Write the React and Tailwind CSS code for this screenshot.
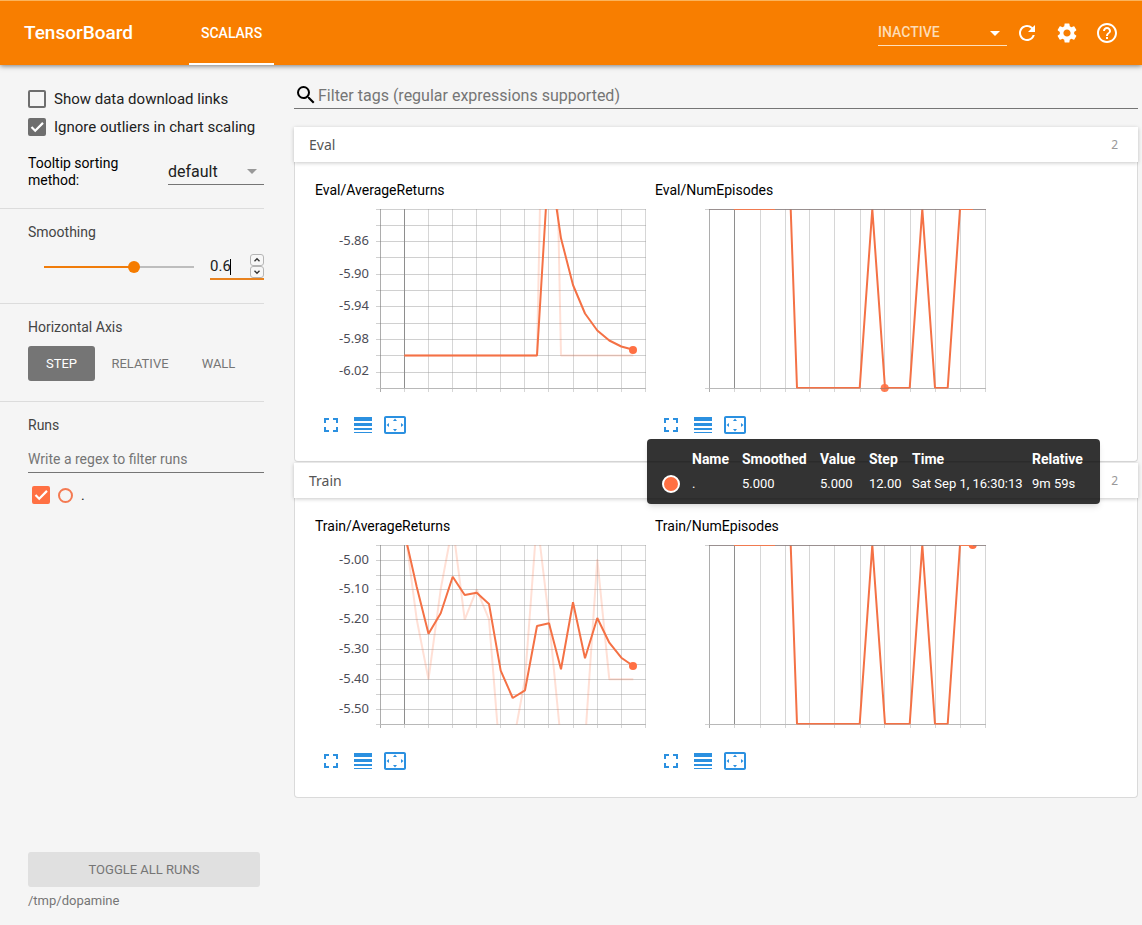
import {
  MdArrowDropDown,
  MdFullscreen,
  MdHelpOutline,
  MdLineWeight,
  MdRefresh,
  MdSearch,
  MdSettings,
  MdSettingsOverscan,
} from 'react-icons/md';

const RETURN_X = [65, 89, 113, 137, 161, 185, 209, 233, 258, 282, 306, 330];
const EPISODE_X = [54, 79, 105, 130, 154, 179, 205, 229, 255, 280, 305, 330];

const EPISODE_LINE =
  'M135.7 6L142 185H204.7L217.3 6L230 185H254.7L267.3 6L280 185H292.7L305 6H317.7';

const SECTIONS = [
  {
    name: 'Eval',
    charts: [
      {
        id: 'eval-returns',
        title: 'Eval/AverageReturns',
        xs: RETURN_X,
        ys: [6, 22, 38, 54, 71, 87, 103, 120, 136, 152, 169, 185],
        labels: [
          [38, '-5.86'],
          [71, '-5.90'],
          [103, '-5.94'],
          [136, '-5.98'],
          [168, '-6.02'],
        ],
        line: 'M89.3 152.5H222L234 -46L246 35.3L258 82L270 110.5L282.3 127.5L294.3 137.5L306.3 143.5L318.3 146.8',
        raw: 'M89.3 152.5H222L234 -448L246 152.5H318.3',
        dot: [318, 147],
      },
      {
        id: 'eval-episodes',
        title: 'Eval/NumEpisodes',
        xs: EPISODE_X,
        ys: [6, 185],
        labels: [],
        line: EPISODE_LINE,
        dot: [229.7, 185],
        hovered: true,
      },
    ],
  },
  {
    name: 'Train',
    charts: [
      {
        id: 'train-returns',
        title: 'Train/AverageReturns',
        xs: RETURN_X,
        ys: [6, 21, 36, 50, 66, 80, 95, 110, 125, 140, 155, 170, 185],
        labels: [
          [21, '-5.00'],
          [50, '-5.10'],
          [80, '-5.20'],
          [110, '-5.30'],
          [140, '-5.40'],
          [170, '-5.50'],
        ],
        line: 'M89.3 -7L101.7 47.7L113.5 94.7L125.7 74.3L137.7 37.7L149.7 56L161.7 53.7L174 65L185.7 131.7L197.7 159L210 151.3L222 87L234 84.3L246 130.3L258 63.3L270 119.3L282.3 79L294.3 103.7L306.3 118.7L318.3 127',
        raw: 'M89.3 -14L101.7 80.3L113.5 140.3L125.7 50.3L137.7 -14L149.7 80.7L161.7 50.3L174 80.3L185.7 227L197.7 207L210 140.3L222 -20L234 80.3L246 203M270 203L282.3 20.3L294.3 140.3H318.3',
        dot: [318, 127],
      },
      {
        id: 'train-episodes',
        title: 'Train/NumEpisodes',
        xs: EPISODE_X,
        ys: [6, 185],
        labels: [],
        line: EPISODE_LINE,
        dot: [317.7, 6],
        clipDot: true,
      },
    ],
  },
];

function Chart({ chart }) {
  const { id, title, xs, ys, labels, line, raw, dot, clipDot, hovered } = chart;
  const left = xs[0];
  const framed = labels.length === 0;
  const marker = (
    <circle cx={dot[0]} cy={dot[1]} r="4" fill="#ff7043" opacity={hovered ? 0.9 : 1} />
  );
  return (
    <svg
      className="block overflow-visible"
      width="330"
      height="196"
      viewBox="0 0 330 196"
      role="img"
      aria-label={title}
    >
      <defs>
        <clipPath id={id}>
          <rect x={left} y="6" width={331 - left} height="179.5" />
        </clipPath>
      </defs>
      <g shapeRendering="crispEdges">
        {ys.map((y) => (
          <path key={y} d={`M${left - 4} ${y + 0.5}H331`} stroke="#d0d0d0" />
        ))}
        {xs.map((x, i) => (
          <path
            key={x}
            d={`M${x + 0.5} 6V189`}
            stroke={i === 0 ? '#777777' : '#999999'}
            strokeOpacity={i === 0 ? 0.6 : 0.4}
          />
        ))}
        <path d={`M${xs[1] + 0.5} 6V186`} stroke="#8e8e8e" />
        <path d={`M${left} 185.5H331`} stroke="#b8b8b8" />
      </g>
      <g clipPath={`url(#${id})`} fill="none" strokeWidth="2" strokeLinejoin="bevel">
        {raw && <path d={raw} stroke="#ff7043" strokeOpacity="0.22" />}
        <path d={line} stroke="#f47145" />
        {clipDot && marker}
      </g>
      {framed && (
        <g>
          <rect x={left} y="6" width={331 - left} height="1" fill="#8c8080" fillOpacity="0.8" />
          <rect x="79" y="6" width="41" height="1" fill="#f07a50" />
          <rect x="305" y="6" width="13" height="1" fill="#f07a50" />
        </g>
      )}
      {!clipDot && marker}
      {hovered && <path d="M225 185.5H234" stroke="#9a7468" strokeOpacity="0.6" />}
      <g fill="#4c4c56" textAnchor="end" className="font-['Noto_Sans',sans-serif] text-[13px]">
        {labels.map(([y, text]) => (
          <text key={text} x="54" y={y + 4}>
            {text}
          </text>
        ))}
      </g>
    </svg>
  );
}

function ChartTooltip() {
  return (
    <div className="absolute top-[259px] -left-2 z-10 w-max rounded bg-black/80 px-[15px] py-2 text-white shadow-md">
      <table className="w-max text-left whitespace-nowrap">
        <thead>
          <tr className="h-6 text-sm">
            <td className="min-w-[30px]" />
            <th className="min-w-[50px]">Name</th>
            <th className="min-w-[78px]">Smoothed</th>
            <th className="min-w-[49px]">Value</th>
            <th className="min-w-[43px]">Step</th>
            <th className="min-w-[120px]">Time</th>
            <th className="min-w-[53px]">Relative</th>
          </tr>
        </thead>
        <tbody>
          <tr className="h-[25px] text-[13px]">
            <td>
              <span className="block size-[18px] rounded-full border-2 border-white bg-[#ff7043]" />
            </td>
            <td>.</td>
            <td>5.000</td>
            <td>5.000</td>
            <td>12.00</td>
            <td>Sat Sep 1, 16:30:13</td>
            <td>9m 59s</td>
          </tr>
        </tbody>
      </table>
    </div>
  );
}

function ChartCard({ chart }) {
  return (
    <article className="relative w-[330px]">
      <h3 className="mb-[3px] text-sm leading-5 text-black">{chart.title}</h3>
      <Chart chart={chart} />
      <div className="mt-3.5 flex gap-2 pl-1 text-[#2b90e0]">
        <button type="button" aria-label="Toggle full size">
          <MdFullscreen size={24} />
        </button>
        <button type="button" aria-label="Toggle log scale">
          <MdLineWeight size={24} />
        </button>
        <button type="button" aria-label="Fit domain to data">
          <MdSettingsOverscan size={24} />
        </button>
      </div>
      {chart.hovered && <ChartTooltip />}
    </article>
  );
}

function Section({ section }) {
  return (
    <section>
      <button
        type="button"
        className="relative flex h-[35px] w-full items-center justify-between bg-white px-[15px] font-['Noto_Sans',sans-serif] text-sm text-[#555] shadow-[0_1px_4px_rgba(0,0,0,0.22)]"
      >
        <span>{section.name}</span>
        <span className="mr-[5px] text-xs text-[#999]">{section.charts.length}</span>
      </button>
      <div className="flex min-h-[300px] flex-wrap gap-x-2.5 rounded-b-sm border border-t-0 border-[#dadada] bg-white py-[18px] pl-5">
        {section.charts.map((chart) => (
          <ChartCard key={chart.id} chart={chart} />
        ))}
      </div>
    </section>
  );
}

function CheckMark() {
  return (
    <svg
      viewBox="0 0 18 18"
      className="pointer-events-none absolute inset-0 hidden text-white peer-checked:block"
      fill="none"
      stroke="currentColor"
      strokeWidth="2.2"
    >
      <path d="M3.5 9L7.2 12.7L15 4.9" />
    </svg>
  );
}

function Checkbox({ label, checked }) {
  return (
    <label className="flex h-7 items-center gap-2 text-[15px] whitespace-nowrap text-[#212121]">
      <span className="relative size-[18px]">
        <input
          type="checkbox"
          defaultChecked={checked}
          className="peer block size-[18px] appearance-none rounded-xs border-2 border-[#6e6e6e] checked:bg-[#6e6e6e]"
        />
        <CheckMark />
      </span>
      <span className="pt-0.5">{label}</span>
    </label>
  );
}

function Spinner() {
  return (
    <span className="flex flex-col text-[#333]">
      {['M3.5 7.5L6.5 4.5L9.5 7.5', 'M3.5 4.5L6.5 7.5L9.5 4.5'].map((d, i) => (
        <button
          key={d}
          type="button"
          aria-label={i === 0 ? 'Increase' : 'Decrease'}
          className="h-3 w-3.5 rounded-[3px] border border-[#b5b5b5] bg-[#f7f7f7]"
        >
          <svg
            viewBox="0 0 13 12"
            className="block h-2.5 w-3"
            fill="none"
            stroke="currentColor"
            strokeWidth="1.6"
          >
            <path d={d} />
          </svg>
        </button>
      ))}
    </span>
  );
}

function Sidebar() {
  return (
    <aside className="flex w-[264px] shrink-0 flex-col pt-5 pb-3.5 text-sm text-[#444]">
      <div className="border-b border-[#dcdcdc] pb-[23px] pl-7">
        <Checkbox label="Show data download links" />
        <Checkbox label="Ignore outliers in chart scaling" checked />
        <div className="mt-3 flex h-8 justify-between">
          <label htmlFor="sorting" className="w-28 pt-0.5 leading-[17px] text-black">
            Tooltip sorting method:
          </label>
          <span className="relative flex h-8 w-24 border-b border-[#757575]">
            <select
              id="sorting"
              className="w-full appearance-none pt-1.5 text-base text-[#212121] outline-none"
            >
              <option>default</option>
            </select>
            <MdArrowDropDown
              size={24}
              className="pointer-events-none absolute top-1.5 right-0 text-[#999]"
            />
          </span>
        </div>
      </div>

      <div className="border-b border-[#dcdcdc] pt-[13px] pb-[23px] pl-7">
        <label htmlFor="smoothing" className="block leading-5">
          Smoothing
        </label>
        <div className="mt-[11px] flex items-center justify-between pl-2.5">
          <input
            id="smoothing"
            type="range"
            min="0"
            max="1"
            step="0.1"
            defaultValue="0.6"
            className="h-3 w-[162px] appearance-none bg-[linear-gradient(to_right,#f07c0a_60%,#bdbdbd_60%)] bg-[length:150px_2px] bg-center bg-no-repeat [&::-webkit-slider-thumb]:size-3 [&::-webkit-slider-thumb]:appearance-none [&::-webkit-slider-thumb]:rounded-full [&::-webkit-slider-thumb]:bg-[#f57c00]"
          />
          <span className="relative flex w-[54px] items-center justify-between border-b-2 border-[#e8821e] pt-px">
            <input
              type="text"
              inputMode="decimal"
              aria-label="Smoothing value"
              defaultValue="0.6"
              className="w-9 text-[15px] leading-6 text-[#212121] outline-none"
            />
            <span className="absolute top-1.5 left-5 h-4 w-px bg-black" />
            <Spinner />
          </span>
        </div>
      </div>

      <div className="border-b border-[#dcdcdc] pt-[13px] pb-5 pl-7">
        <h2 className="leading-5">Horizontal Axis</h2>
        <div className="mt-[9px] flex gap-[3px] text-[13px] text-[#757575]">
          <button
            type="button"
            className="h-[35px] w-[67px] rounded-[3px] bg-[#757575] pt-0.5 text-white"
          >
            STEP
          </button>
          <button type="button" className="h-[35px] w-[84px] pt-0.5">
            RELATIVE
          </button>
          <button type="button" className="h-[35px] w-[67px] pt-0.5">
            WALL
          </button>
        </div>
      </div>

      <div className="pt-[13px] pl-7">
        <h2 className="leading-5">Runs</h2>
        <input
          type="text"
          aria-label="Filter runs"
          placeholder="Write a regex to filter runs"
          className="mt-2.5 block h-7 w-full border-b border-[#757575] outline-none placeholder:text-[#757575]"
        />
        <label className="mt-[13px] flex items-center gap-2 pl-1 text-[#212121]">
          <span className="relative size-[18px]">
            <input
              type="checkbox"
              defaultChecked
              className="peer block size-[18px] appearance-none rounded-xs border-2 border-[#ff7043] checked:bg-[#ff7043]"
            />
            <CheckMark />
          </span>
          <span className="size-[15px] rounded-full border-2 border-[#f47a52]" />
          <span className="leading-[18px]">.</span>
        </label>
      </div>

      <div className="mt-auto pr-1 pl-7 text-[13px] text-[#757575]">
        <button type="button" className="block h-[35px] w-full rounded-[3px] bg-[#e0e0e0] pt-0.5">
          TOGGLE ALL RUNS
        </button>
        <p className="mt-1 leading-5">/tmp/dopamine</p>
      </div>
    </aside>
  );
}

function Header() {
  return (
    <header className="relative z-20 flex h-[65px] items-center border-t border-[#fbb45c] bg-[#f87e00] pr-[23px] pl-6 text-white shadow-[0_1px_5px_rgba(0,0,0,0.5)]">
      <h1 className="w-[165px] text-[19px] font-medium">TensorBoard</h1>
      <nav className="h-full">
        <a
          href="#scalars"
          className="flex h-full items-center border-y-2 border-t-transparent border-b-white px-3 text-sm font-medium"
        >
          SCALARS
        </a>
      </nav>
      <div className="ml-auto flex items-center gap-4">
        <span className="relative -mr-2 mb-0.5 flex h-[27px] w-[129px] border-b border-[#fde0bd]">
          <select
            aria-label="Inactive dashboards"
            className="w-full appearance-none text-sm font-medium text-[#fddcb5] outline-none"
          >
            <option>INACTIVE</option>
          </select>
          <MdArrowDropDown size={24} className="pointer-events-none absolute top-0.5 right-0" />
        </span>
        <button type="button" aria-label="Reload">
          <MdRefresh size={24} />
        </button>
        <button type="button" aria-label="Settings">
          <MdSettings size={24} />
        </button>
        <a href="#help" aria-label="Help">
          <MdHelpOutline size={24} />
        </a>
      </div>
    </header>
  );
}

export default function App() {
  return (
    <div className="flex min-h-screen flex-col bg-[#f5f5f5] font-[Roboto,sans-serif]">
      <Header />
      <div className="flex grow">
        <Sidebar />
        <main className="min-w-0 grow pt-[17px] pr-1 pl-[30px]">
          <label className="mb-[18px] flex h-[27px] items-center border-b border-[#757575] text-black">
            <MdSearch size={24} aria-hidden="true" />
            <input
              type="text"
              aria-label="Filter tags"
              placeholder="Filter tags (regular expressions supported)"
              className="grow pt-0.5 text-base outline-none placeholder:text-[#757575]"
            />
          </label>
          <div className="flex flex-col gap-px">
            {SECTIONS.map((section) => (
              <Section key={section.name} section={section} />
            ))}
          </div>
        </main>
      </div>
    </div>
  );
}
